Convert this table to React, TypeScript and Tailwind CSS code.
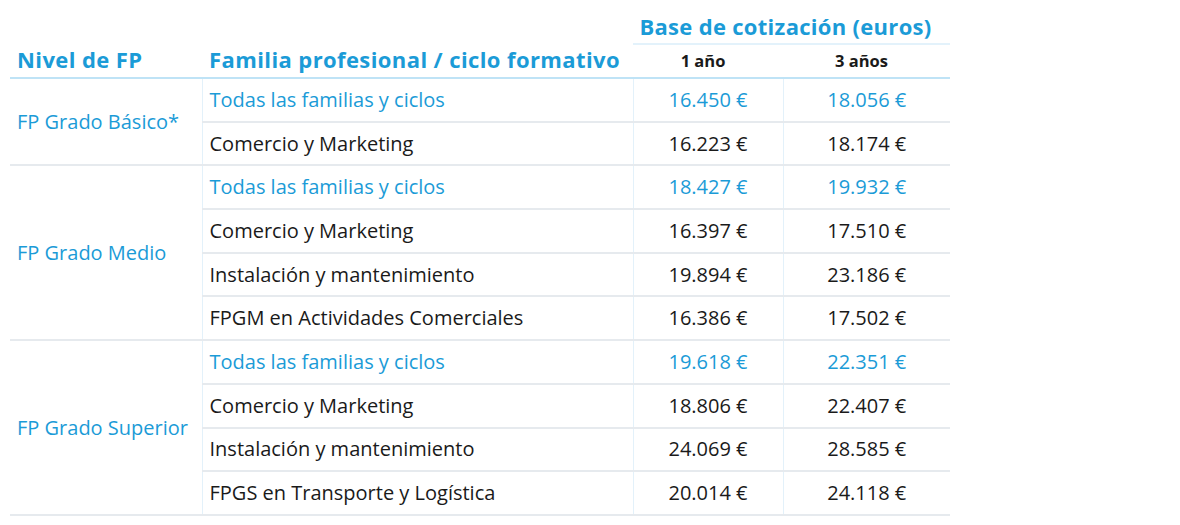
import React from "react";

const BLUE = "text-[#1b9bd7]";

type Row = { name: string; a: string; b: string; hl?: boolean };
type Group = { level: string; rows: Row[] };

const groups: Group[] = [
  {
    level: "FP Grado Básico*",
    rows: [
      { name: "Todas las familias y ciclos", a: "16.450 €", b: "18.056 €", hl: true },
      { name: "Comercio y Marketing", a: "16.223 €", b: "18.174 €" },
    ],
  },
  {
    level: "FP Grado Medio",
    rows: [
      { name: "Todas las familias y ciclos", a: "18.427 €", b: "19.932 €", hl: true },
      { name: "Comercio y Marketing", a: "16.397 €", b: "17.510 €" },
      { name: "Instalación y mantenimiento", a: "19.894 €", b: "23.186 €" },
      { name: "FPGM en Actividades Comerciales", a: "16.386 €", b: "17.502 €" },
    ],
  },
  {
    level: "FP Grado Superior",
    rows: [
      { name: "Todas las familias y ciclos", a: "19.618 €", b: "22.351 €", hl: true },
      { name: "Comercio y Marketing", a: "18.806 €", b: "22.407 €" },
      { name: "Instalación y mantenimiento", a: "24.069 €", b: "28.585 €" },
      { name: "FPGS en Transporte y Logística", a: "20.014 €", b: "24.118 €" },
    ],
  },
];

export default function App() {
  return (
    <div
      className="w-[1180px] h-[525px] bg-white overflow-hidden pl-[10px] pt-[12px]"
      style={{ fontFamily: '"Open Sans", "Noto Sans", sans-serif' }}
    >
      <table className="border-collapse w-[940px] table-fixed">
        <colgroup>
          <col className="w-[192px]" />
          <col className="w-[431px]" />
          <col className="w-[150px]" />
          <col className="w-[167px]" />
        </colgroup>
        <thead>
          <tr className="h-[32px]">
            <th className="p-0" />
            <th className="p-0" />
            <th
              colSpan={2}
              className={`p-0 pb-[4px] text-center align-middle font-bold text-[22px] leading-none tracking-[0.3px] ${BLUE} border-b-2 border-[#e3f2fb]`}
            >
              <span className="relative left-[-6px]">Base de cotización (euros)</span>
            </th>
          </tr>
          <tr className="h-[34px]">
            <th className={`p-0 pl-[7px] pb-[3px] text-left align-middle font-bold text-[22px] leading-none tracking-[0.4px] ${BLUE} border-b-2 border-[#bfe3f6]`}>
              Nivel de FP
            </th>
            <th className={`p-0 pl-[7px] pb-[3px] text-left align-middle font-bold text-[22px] leading-none tracking-[0.4px] whitespace-nowrap ${BLUE} border-b-2 border-[#bfe3f6]`}>
              Familia profesional / ciclo formativo
            </th>
            <th className="p-0 pr-[10px] text-center align-middle font-bold text-[16.5px] leading-none text-[#1a1a1a] border-b-2 border-[#bfe3f6]">
              1 año
            </th>
            <th className="p-0 pr-[10px] text-center align-middle font-bold text-[16.5px] leading-none text-[#1a1a1a] border-b-2 border-[#bfe3f6]">
              3 años
            </th>
          </tr>
        </thead>
        <tbody>
          {groups.map((g) =>
            g.rows.map((r, i) => (
              <tr key={g.level + i} className="h-[43.7px]">
                {i === 0 && (
                  <td
                    rowSpan={g.rows.length}
                    className={`p-0 pl-[7px] align-middle text-[20px] ${BLUE} border-b-2 border-[#e6eaee] border-r border-r-[#e3f1fa]`}
                  >
                    {g.level}
                  </td>
                )}
                <td
                  className={`p-0 pl-[7px] align-middle text-[20px] whitespace-nowrap ${
                    r.hl ? BLUE : "text-[#1a1a1a]"
                  } border-b-2 border-[#e6eaee] border-r border-r-[#e3f1fa]`}
                >
                  {r.name}
                </td>
                <td
                  className={`p-0 text-center align-middle text-[20px] ${
                    r.hl ? BLUE : "text-[#1a1a1a]"
                  } border-b-2 border-[#e6eaee] border-r border-r-[#e3f1fa]`}
                >
                  {r.a}
                </td>
                <td
                  className={`p-0 text-center align-middle text-[20px] ${
                    r.hl ? BLUE : "text-[#1a1a1a]"
                  } border-b-2 border-[#e6eaee]`}
                >
                  {r.b}
                </td>
              </tr>
            ))
          )}
        </tbody>
      </table>
    </div>
  );
}
